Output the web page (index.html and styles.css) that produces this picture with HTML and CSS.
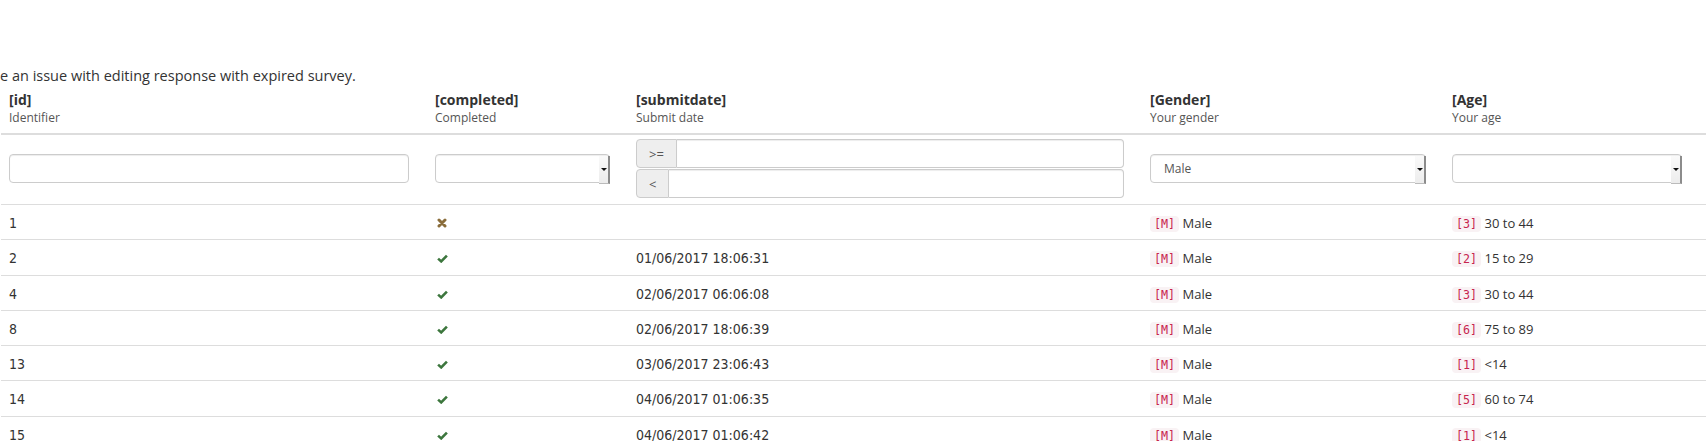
FILE: index.html
```html
<!DOCTYPE html>
<html lang="en">
<head>
<meta charset="utf-8">
<title>Responses</title>
<link rel="stylesheet" href="styles.css">
</head>
<body>
<div class="page">
  <p class="intro">e an issue with editing response with expired survey.</p>
  <table class="grid">
    <colgroup>
      <col class="w-id"><col class="w-comp"><col class="w-date"><col class="w-gender"><col class="w-age">
    </colgroup>
    <thead>
      <tr class="head-row">
        <th><div class="col-key">[id]</div><div class="col-label">Identifier</div></th>
        <th><div class="col-key">[completed]</div><div class="col-label">Completed</div></th>
        <th><div class="col-key">[submitdate]</div><div class="col-label">Submit date</div></th>
        <th><div class="col-key">[Gender]</div><div class="col-label">Your gender</div></th>
        <th><div class="col-key">[Age]</div><div class="col-label">Your age</div></th>
      </tr>
      <tr class="filter-row">
        <td><div class="inp"></div></td>
        <td><div class="sel"><span class="sel-val"></span><span class="sel-arrow"><span class="tri"></span></span></div></td>
        <td>
          <div class="ig"><span class="addon">&gt;=</span><span class="ig-input"></span></div>
          <div class="ig"><span class="addon">&lt;</span><span class="ig-input"></span></div>
        </td>
        <td><div class="sel"><span class="sel-val">Male</span><span class="sel-arrow"><span class="tri"></span></span></div></td>
        <td><div class="sel sel-last"><span class="sel-val"></span><span class="sel-arrow"><span class="tri"></span></span></div></td>
      </tr>
    </thead>
    <tbody>
      <tr>
        <td class="narrow">1</td>
        <td><svg class="ico ico-no" viewBox="0 0 10 10"><path d="M2 2 L8 8 M8 2 L2 8"/></svg></td>
        <td class="narrow"></td>
        <td class="txt"><code>[M]</code> Male</td>
        <td class="txt"><code>[3]</code> 30 to 44</td>
      </tr>
      <tr>
        <td class="narrow">2</td>
        <td><svg class="ico ico-ok" viewBox="0 0 11 9"><path d="M1.1 4.6 L4.2 7.4 L9.9 1.6"/></svg></td>
        <td class="narrow">01/06/2017 18:06:31</td>
        <td class="txt"><code>[M]</code> Male</td>
        <td class="txt"><code>[2]</code> 15 to 29</td>
      </tr>
      <tr>
        <td class="narrow">4</td>
        <td><svg class="ico ico-ok" viewBox="0 0 11 9"><path d="M1.1 4.6 L4.2 7.4 L9.9 1.6"/></svg></td>
        <td class="narrow">02/06/2017 06:06:08</td>
        <td class="txt"><code>[M]</code> Male</td>
        <td class="txt"><code>[3]</code> 30 to 44</td>
      </tr>
      <tr>
        <td class="narrow">8</td>
        <td><svg class="ico ico-ok" viewBox="0 0 11 9"><path d="M1.1 4.6 L4.2 7.4 L9.9 1.6"/></svg></td>
        <td class="narrow">02/06/2017 18:06:39</td>
        <td class="txt"><code>[M]</code> Male</td>
        <td class="txt"><code>[6]</code> 75 to 89</td>
      </tr>
      <tr>
        <td class="narrow">13</td>
        <td><svg class="ico ico-ok" viewBox="0 0 11 9"><path d="M1.1 4.6 L4.2 7.4 L9.9 1.6"/></svg></td>
        <td class="narrow">03/06/2017 23:06:43</td>
        <td class="txt"><code>[M]</code> Male</td>
        <td class="txt"><code>[1]</code> &lt;14</td>
      </tr>
      <tr>
        <td class="narrow">14</td>
        <td><svg class="ico ico-ok" viewBox="0 0 11 9"><path d="M1.1 4.6 L4.2 7.4 L9.9 1.6"/></svg></td>
        <td class="narrow">04/06/2017 01:06:35</td>
        <td class="txt"><code>[M]</code> Male</td>
        <td class="txt"><code>[5]</code> 60 to 74</td>
      </tr>
      <tr>
        <td class="narrow">15</td>
        <td><svg class="ico ico-ok" viewBox="0 0 11 9"><path d="M1.1 4.6 L4.2 7.4 L9.9 1.6"/></svg></td>
        <td class="narrow">04/06/2017 01:06:42</td>
        <td class="txt"><code>[M]</code> Male</td>
        <td class="txt"><code>[1]</code> &lt;14</td>
      </tr>
    </tbody>
  </table>
</div>
</body>
</html>
```

FILE: styles.css
```css
html, body {
  margin: 0;
  padding: 0;
  background: #fff;
}
body {
  overflow: hidden;
  font-family: "Open Sans", "Noto Sans", sans-serif;
  color: #333;
}
.page {
  padding-top: 66px;
}
.intro {
  margin: 0;
  font-size: 14.5px;
  line-height: 20px;
  color: #333;
}
.grid {
  border-collapse: collapse;
  table-layout: fixed;
  width: 1705px;
  margin-left: 1px;
}
.w-id { width: 426px; }
.w-comp { width: 201px; }
.w-date { width: 514px; }
.w-gender { width: 302px; }
.w-age { width: 262px; }

.head-row th {
  text-align: left;
  vertical-align: bottom;
  padding: 4px 8px 7px;
  border-bottom: 2px solid #ddd;
}
.col-key {
  font-weight: 700;
  font-size: 14px;
  line-height: 20px;
  color: #333;
}
.col-label {
  font-weight: 400;
  font-size: 12px;
  line-height: 16px;
  color: #555;
}

.filter-row td {
  padding: 4px 8px 6px;
  border-bottom: 1px solid #ddd;
  vertical-align: middle;
}
.inp {
  box-sizing: border-box;
  width: calc(100% - 10px);
  height: 29px;
  border: 1px solid #ccc;
  border-radius: 4px;
  background: #fff;
  box-shadow: inset 0 1px 1px rgba(0, 0, 0, .075);
}
.sel {
  box-sizing: border-box;
  display: flex;
  width: calc(100% - 10px);
  height: 29px;
  border: 1px solid #ccc;
  border-radius: 4px;
  background: #fff;
  box-shadow: inset 0 1px 1px rgba(0, 0, 0, .075);
}
.sel-last {
  width: calc(100% - 16px);
}
.sel-val {
  flex: 1;
  padding-left: 13px;
  font-size: 12px;
  line-height: 27px;
  color: #555;
}
.sel-arrow {
  width: 9px;
  margin: 1px -1px -2px 0;
  background: linear-gradient(#fafafa, #ececec);
  border-right: 2px solid #8c8c8c;
  border-bottom: 1px solid #bbb;
  display: flex;
  align-items: center;
  justify-content: center;
}
.tri {
  width: 0;
  height: 0;
  border-left: 3px solid transparent;
  border-right: 3px solid transparent;
  border-top: 3px solid #111;
}
.ig {
  display: flex;
  box-sizing: border-box;
  width: calc(100% - 10px);
  height: 29px;
}
.ig + .ig {
  margin-top: 1px;
}
.addon {
  display: flex;
  align-items: center;
  padding: 0 12px;
  background: #eee;
  border: 1px solid #ccc;
  border-radius: 4px 0 0 4px;
  font-size: 13px;
  color: #555;
}
.ig-input {
  flex: 1;
  border: 1px solid #ccc;
  border-left: 0;
  border-radius: 0 4px 4px 0;
  background: #fff;
  box-shadow: inset 0 1px 1px rgba(0, 0, 0, .075);
}

tbody td {
  padding: 9px 8px 7px;
  height: 18.3px;
  line-height: 18.3px;
  border-bottom: 1px solid #ddd;
  vertical-align: top;
  white-space: nowrap;
  overflow: hidden;
}
.narrow {
  font-family: "Liberation Sans Narrow", "DejaVu Sans Condensed", "Roboto", sans-serif;
  font-size: 14px;
  color: #333;
}
.txt {
  font-family: "Open Sans", "Noto Sans", sans-serif;
  font-size: 13px;
  color: #333;
}
code {
  display: inline-block;
  font-family: "DejaVu Sans Mono", "Liberation Mono", monospace;
  font-size: 11.7px;
  line-height: 12px;
  padding: 2px 4px;
  color: #c7254e;
  background: #f9f2f4;
  border-radius: 4px;
  vertical-align: baseline;
}
.ico {
  display: block;
  margin: 4px 0 0 2px;
  fill: none;
}
.ico-no {
  width: 10px;
  height: 10px;
  stroke: #8a6d3b;
  stroke-width: 3;
  stroke-linecap: round;
}
.ico-ok {
  width: 11px;
  height: 9px;
  margin-top: 5px;
  stroke: #3c763d;
  stroke-width: 2.6;
  stroke-linecap: butt;
}
```
